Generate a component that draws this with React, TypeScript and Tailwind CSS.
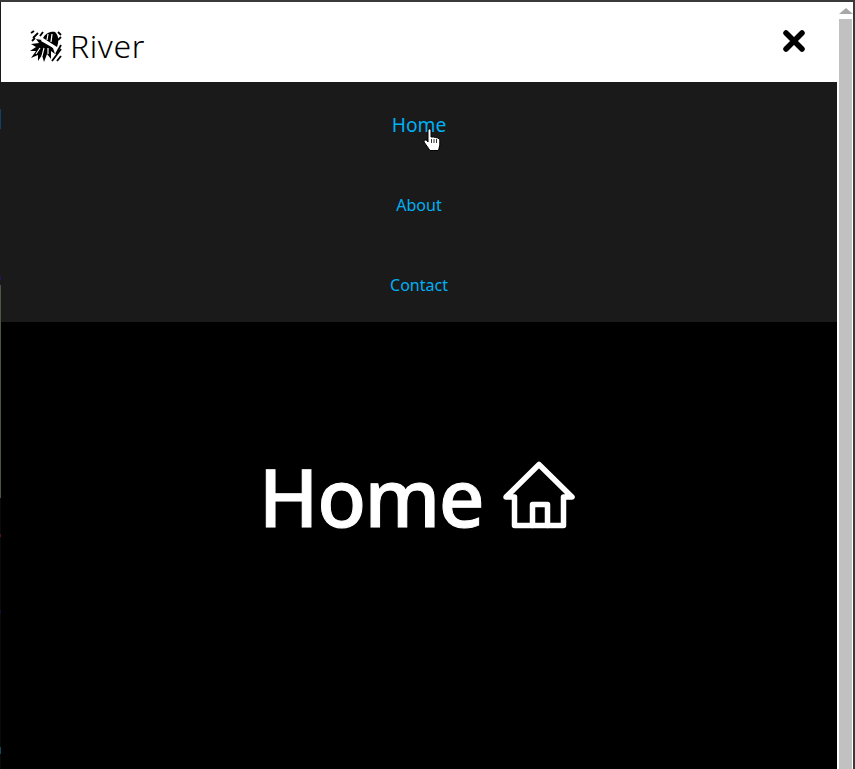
const navItems = [
	{ label: 'Home', className: 'text-[19.2px]' },
	{ label: 'About', className: 'text-[16px]' },
	{ label: 'Contact', className: 'text-[16px]' },
];

// left edge of the window, bits of whatever is behind it
const edgeSegments = [
	{ id: 1, className: 'h-[107px] bg-[#1a1a1a]' },
	{ id: 2, className: 'h-[20px] bg-[#10406a]' },
	{ id: 3, className: 'h-[147px] bg-[#1a1a1a]' },
	{ id: 4, className: 'h-[4px] bg-[#301060]' },
	{ id: 5, className: 'h-[5px] bg-[#1a1a1a]' },
	{ id: 6, className: 'h-[213px] bg-[#4a5548]' },
	{ id: 7, className: 'h-[36px] bg-[#0a0a0a]' },
	{ id: 8, className: 'h-[3px] bg-[#5a1010]' },
	{ id: 9, className: 'h-[73px] bg-[#0a0a0a]' },
	{ id: 10, className: 'h-[3px] bg-[#101040]' },
	{ id: 11, className: 'h-[134px] bg-[#0a0a0a]' },
	{ id: 12, className: 'h-[7px] bg-[#104a5a]' },
	{ id: 13, className: 'flex-1 bg-[#0a0a0a]' },
];

// rough drawing of the lion head logo
const Logo = () => (
	<svg width="32" height="32" viewBox="0 0 32 32" className="shrink-0">
		<path
			d="M1 14 L9 13 L6 9 L12 10 L18 13 L23 18 L25 24 L21 21 L21 29 L17 24 L14 32 L12 25 L8 31 L8 25 L1 28 L6 21 L0 21 L6 17 Z"
			fill="#000"
		/>
		<path d="M13 8 C15 4 20 1 25 2 C29 6 29 11 27 17 Z" fill="#000" />
		<path d="M12 9 L26 17 L25 19 L11 11 Z" fill="#fff" />
		<g stroke="#fff" strokeWidth="1.2" fill="none">
			<path d="M18 4 L17 10" />
			<path d="M22 4 L21 12" />
			<path d="M10 18 L6 24" />
			<path d="M14 18 L12 26" />
			<path d="M18 18 L18 24" />
		</g>
		<g stroke="#000" strokeWidth="1.8" fill="none">
			<path d="M1 3 L4 1" />
			<path d="M3 8 L8 3" />
			<path d="M2 11 L5 8" />
			<path d="M10 6 L13 2" />
			<path d="M28 2 L31 5" />
			<path d="M28 10 L31 7" />
			<path d="M26 24 L31 15" />
			<path d="M22 31 L31 19" />
			<path d="M27 31 L31 26" />
		</g>
	</svg>
);

const HomeIcon = () => (
	<svg width="72" height="68" viewBox="0 0 72 68" className="shrink-0" fill="none" stroke="#fff" strokeWidth="5.5" strokeLinejoin="round" strokeLinecap="round">
		<path d="M3 36 L36 3.5 L69 36 L60.5 36 L60.5 64.5 L11.5 64.5 L11.5 36 Z" />
		<path d="M29.5 64.5 L29.5 43.5 L44.5 43.5 L44.5 64.5" />
	</svg>
);

const HandCursor = () => (
	<svg width="18" height="24" viewBox="0 0 18 24" className="absolute left-[423px] top-[128px]">
		<path
			d="M5 2 C5 0.5 8 0.5 8 2 L8 9 L10.5 9 L12.5 9.5 L15 10 L16.8 11.5 L16.8 17 L15.5 22.5 L7 22.5 L1 14 C0.5 12 2.8 11.3 4 12.5 L5 14 Z"
			fill="#fff"
			stroke="#000"
			strokeWidth="1"
		/>
		<path d="M8.5 11 L8.5 15 M11 11 L11 15 M13.5 11 L13.5 15" stroke="#333" strokeWidth="1" />
	</svg>
);

export default function App() {
	return (
		<div className="relative flex flex-col h-[769px] w-[855px] overflow-hidden bg-[#1d1d1f] font-['Noto_Sans','Open_Sans',sans-serif]">
			<div className="h-[2px] shrink-0 bg-[#3a3a3a]" />
			<div className="flex flex-1 min-h-0">
				<div className="flex flex-col w-px shrink-0">
					{edgeSegments.map((segment) => (
						<div key={segment.id} className={segment.className} />
					))}
				</div>
				<div className="flex flex-col w-[836px] shrink-0">
					<header className="flex items-center justify-between h-[80px] shrink-0 bg-white pl-[29px] pr-[32px]">
						<div className="flex items-center gap-[8px] pt-[7px]">
							<Logo />
							<span className="text-[32px] leading-none font-light tracking-[0.6px] text-black">River</span>
						</div>
						<svg width="22" height="22" viewBox="0 0 22 22" className="mb-[2px]">
							<path d="M3 3 L19 19 M19 3 L3 19" stroke="#000" strokeWidth="5.5" strokeLinecap="round" />
						</svg>
					</header>
					<nav className="flex flex-col shrink-0 bg-[#1a1a1a]">
						{navItems.map((item) => (
							<a key={item.label} className={`flex items-center justify-center h-[80px] pt-[6px] text-[#00b0f4] ${item.className}`}>
								{item.label}
							</a>
						))}
					</nav>
					<main className="flex-1 flex justify-center items-start gap-[20px] pt-[119px] pr-[4px] bg-black">
						<h1 className="text-[80px] leading-[109px] font-medium tracking-[-1.5px] [-webkit-text-stroke:1px_white] text-white">Home</h1>
						<div className="pt-[20px]">
							<HomeIcon />
						</div>
					</main>
				</div>
				<div className="flex flex-col w-[16px] shrink-0 bg-white pl-[2px] pr-px">
					<div className="flex justify-center items-center h-[17px] shrink-0">
						<div className="w-0 h-0 border-x-[7px] border-x-transparent border-b-[6px] border-b-[#a8a8a8]" />
					</div>
					<div className="flex-1 bg-[#c1c1c1]" />
				</div>
				<div className="w-[2px] shrink-0 bg-[#3a3a3a]" />
			</div>
			<HandCursor />
		</div>
	);
}
